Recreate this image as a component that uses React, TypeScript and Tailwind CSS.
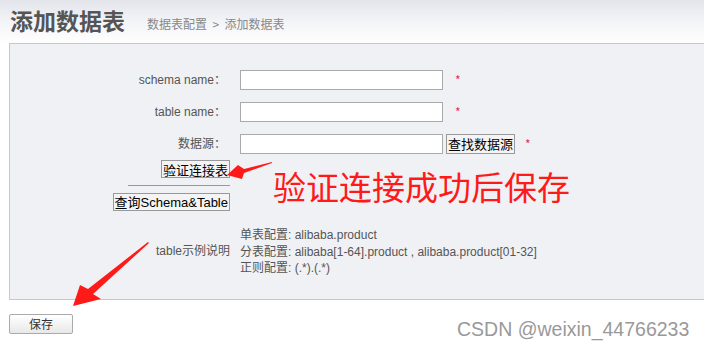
import React from 'react'

const cjk = 'font-["Noto_Sans_CJK_SC","Liberation_Sans",sans-serif]'
const mix = 'font-["Liberation_Sans","Noto_Sans_CJK_SC",sans-serif]'

function Row({ label, children }: { label: string; children: React.ReactNode }) {
  return (
    <div className="flex h-[20px] items-center">
      <div className={`${mix} w-[220px] shrink-0 pr-[4px] text-right text-[12px] text-[#555]`}>{label}</div>
      <div className="ml-[10px] flex items-center">{children}</div>
    </div>
  )
}

const Star = ({ ml }: { ml: string }) => (
  <span className={`${ml} text-[12px] leading-none text-[#e0306a]`}>*</span>
)

export default function App() {
  return (
    <div className={`${cjk} relative h-[349px] w-[704px] overflow-hidden bg-white`}>
      {/* Header */}
      <div className="h-[43px] bg-gradient-to-b from-[#e4e5eb] via-[#f3f4f7] to-white pl-[10px] pt-[6px]">
        <div className="flex items-end">
          <h1 className={`${cjk} text-[23px] font-bold leading-[28px] text-[#555]`}>添加数据表</h1>
          <div className="mb-[1px] ml-[22px] text-[12px] text-[#888]">数据表配置 &nbsp;&gt;&nbsp; 添加数据表</div>
        </div>
      </div>

      {/* Panel */}
      <div className="ml-[9px] h-[257px] w-[700px] border border-r-0 border-[#c8c8c8] bg-[#f0f1f4] pt-[26px]">
        <div className="flex flex-col gap-[12px]">
          <Row label="schema name：">
            <input className="h-[20px] w-[203px] border border-[#aaa] bg-white" />
            <Star ml="ml-[12px]" />
          </Row>
          <Row label="table name：">
            <input className="h-[20px] w-[203px] border border-[#aaa] bg-white" />
            <Star ml="ml-[12px]" />
          </Row>
          <Row label="数据源：">
            <input className="h-[20px] w-[203px] border border-[#aaa] bg-white" />
            <button className="ml-[3px] h-[20px] border border-[#999] bg-[#f4f4f4] px-[1px] text-[13px] leading-[16px] text-black">
              查找数据源
            </button>
            <Star ml="ml-[10px]" />
          </Row>
        </div>

        <div className="mt-[6px] flex w-[220px] flex-col items-end">
          <button className="h-[18px] border border-[#999] bg-[#f4f4f4] px-[1px] text-[13px] leading-[15px] text-black">
            验证连接表
          </button>
          <div className="mt-[7px] h-px w-[102px] bg-[#999]" />
          <button className={`${mix} mt-[7px] h-[18px] border border-[#999] bg-[#f4f4f4] px-[1px] text-[13px] leading-[15px] text-black`}>
            查询Schema&amp;Table
          </button>
        </div>

        <div className="mt-[16px] flex">
          <div className={`${mix} w-[220px] shrink-0 pt-[15px] text-right text-[12px] text-[#555]`}>table示例说明</div>
          <div className={`${mix} ml-[10px] text-[12px] leading-[16.5px] text-[#555]`}>
            <div>单表配置: alibaba.product</div>
            <div>分表配置: alibaba[1-64].product , alibaba.product[01-32]</div>
            <div>正则配置: (.*).(.*)</div>
          </div>
        </div>
      </div>

      {/* Save */}
      <div className="ml-[9px] mt-[10px]">
        <button className="h-[20px] w-[64px] rounded-[2px] border border-[#aaa] bg-gradient-to-b from-white to-[#e8e8e8] text-[12px] text-[#333]">
          保存
        </button>
      </div>

      {/* Annotations */}
      <div className={`${cjk} absolute left-[273px] top-[165px] text-[33px] leading-[42px] text-[#ff1a1a]`}>
        验证连接成功后保存
      </div>
      <svg className="absolute left-0 top-0" width="704" height="349" viewBox="0 0 704 349">
        <path d="M272 162 L244 169 L238 165 L227 175 L242 179 L244 173 L272 163 Z" fill="#ff1a1a" />
        <path d="M149 243 L93 294 L101 299 L73 306 L80 285 L88 289 L148 242 Z" fill="#ff1a1a" />
      </svg>

      <div className={`${mix} absolute left-[457px] top-[317px] text-[19.5px] leading-[24px] text-[#999]`}>
        CSDN @weixin_44766233
      </div>
    </div>
  )
}
